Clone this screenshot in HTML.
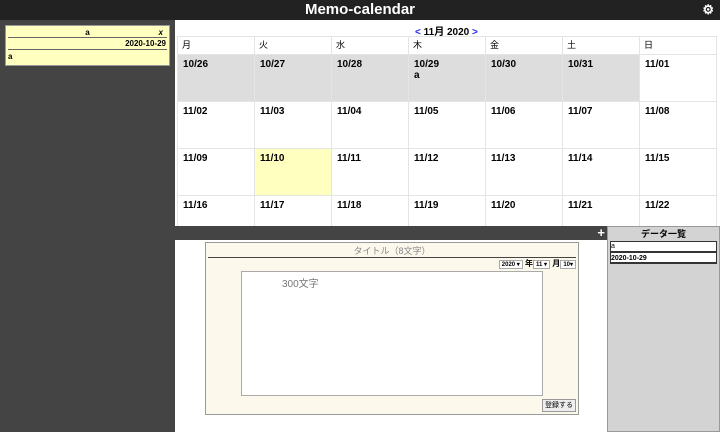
<!DOCTYPE html>
<html><head><meta charset="utf-8"><style>
*{margin:0;padding:0;box-sizing:border-box}
body{width:720px;height:432px;overflow:hidden;background:#fff;font-family:"Liberation Sans","Noto Sans CJK JP",sans-serif;position:relative}
.a{position:absolute}
#hd{left:0;top:0;width:720px;height:20px;background:#222;color:#fff;font-size:15px;font-weight:bold;text-align:center;line-height:20px}
#side{left:0;top:20px;width:175px;height:412px;background:#444}
#card{left:5px;top:25px;width:165px;height:41px;background:#ffffc0;border:1px solid #999;font-size:8px;font-weight:bold}
#tw{left:177px;top:36px;width:541px;height:190px;overflow:hidden}
table{border-collapse:collapse;table-layout:fixed}
td{border:1px solid #e4e4e4;width:77px;vertical-align:top;font-size:10px;font-weight:bold;padding:3px 5px}
tr.h td{height:15px;font-weight:normal;font-size:9px;padding:2px 4px;line-height:13px}
tr.w td{height:47px;padding:4px 5px}
.g{background:#ddd}
.y{background:#ffffc0}
.sel{border:1px solid #aaa;background:#fff;font-size:6px;height:9px;padding:0 2px;display:inline-block;line-height:8px}
</style></head><body>
<div class="a" id="hd">Memo-calendar<span class="a" style="right:6px;top:0;font-size:13px">⚙</span></div>
<div class="a" id="side"></div>
<div class="a" id="card">
<div style="text-align:center;border-bottom:1px solid #666;margin:0 2px;height:12px;line-height:13px;position:relative">a<span style="position:absolute;right:4px;font-style:italic">x</span></div>
<div style="text-align:right;border-bottom:1px solid #666;margin:0 2px;height:12px;line-height:12px;padding-right:1px">2020-10-29</div>
<div style="padding-left:2px;line-height:13px">a</div>
</div>
<div class="a" style="left:415px;top:23px;font-size:10px;font-weight:bold"><span style="color:#22f">&lt;</span> 11月 2020 <span style="color:#22f">&gt;</span></div>
<div class="a" id="tw"><table>
<tr class="h"><td>月</td><td>火</td><td>水</td><td>木</td><td>金</td><td>土</td><td>日</td></tr>
<tr class="w"><td class="g">10/26</td><td class="g">10/27</td><td class="g">10/28</td><td class="g">10/29<br>a</td><td class="g">10/30</td><td class="g">10/31</td><td>11/01</td></tr>
<tr class="w"><td>11/02</td><td>11/03</td><td>11/04</td><td>11/05</td><td>11/06</td><td>11/07</td><td>11/08</td></tr>
<tr class="w"><td>11/09</td><td class="y">11/10</td><td>11/11</td><td>11/12</td><td>11/13</td><td>11/14</td><td>11/15</td></tr>
<tr class="w"><td>11/16</td><td>11/17</td><td>11/18</td><td>11/19</td><td>11/20</td><td>11/21</td><td>11/22</td></tr>
</table></div>
<div class="a" style="left:175px;top:226px;width:432px;height:14px;background:#444;color:#fff;font-size:13px;font-weight:bold;text-align:right;padding-right:2px;line-height:14px">+</div>
<div class="a" style="left:607px;top:226px;width:113px;height:206px;background:#d3d3d3;border:1px solid #999">
<div style="text-align:center;font-size:9px;font-weight:bold;height:14px;line-height:14px">データ一覧</div>
<div style="background:#fff;border:1px solid #333;margin:0 2px;height:11px;font-size:7px;line-height:10px">a</div>
<div style="background:#fff;border:1px solid #333;border-bottom:2px solid #333;margin:0 2px;height:12px;font-size:7px;font-weight:bold;line-height:11px">2020-10-29</div>
</div>
<div class="a" style="left:205px;top:242px;width:374px;height:173px;background:#fdf8ec;border:1px solid #999">
<div style="text-align:center;font-size:9px;color:#888;margin:0 2px;border-bottom:1px solid #444;height:15px;line-height:16px">タイトル（8文字）</div>
<div style="text-align:right;padding-right:2px;margin-top:1px;font-size:8px;font-weight:bold;line-height:10px"><span class="sel">2020 ▾</span> 年<span class="sel">11 ▾</span> 月<span class="sel">10▾</span></div>
<div class="a" style="left:35px;top:28px;width:302px;height:125px;background:#fff;border:1px solid #aaa;font-size:10px;color:#777;padding:3px 0 0 40px">300文字</div>
<div class="a" style="right:2px;bottom:2px;border:1px solid #999;background:#eee;font-size:7px;padding:1px 2px;height:13px;line-height:10px">登録する</div>
</div>
</body></html>
